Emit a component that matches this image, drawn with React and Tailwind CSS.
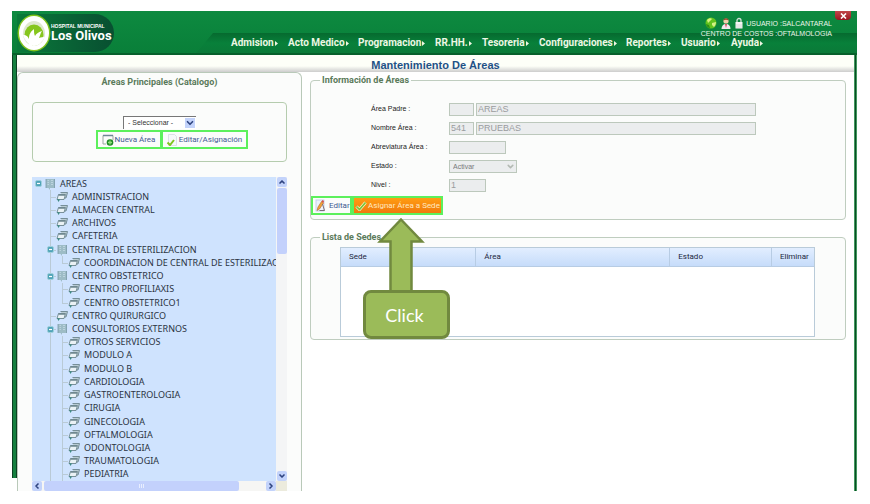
import { ChevronDown, ChevronLeft, ChevronRight, ChevronUp } from 'lucide-react';

const menu = ['Admision', 'Acto Medico', 'Programacion', 'RR.HH.', 'Tesoreria', 'Configuraciones', 'Reportes', 'Usuario', 'Ayuda'];

const tree = [
  [0, 'AREAS', true],
  [1, 'ADMINISTRACION'],
  [1, 'ALMACEN CENTRAL'],
  [1, 'ARCHIVOS'],
  [1, 'CAFETERIA'],
  [1, 'CENTRAL DE ESTERILIZACION', true],
  [2, 'COORDINACION DE CENTRAL DE ESTERILIZACION', false, true],
  [1, 'CENTRO OBSTETRICO', true],
  [2, 'CENTRO PROFILIAXIS'],
  [2, 'CENTRO OBSTETRICO1', false, true],
  [1, 'CENTRO QUIRURGICO'],
  [1, 'CONSULTORIOS EXTERNOS', true],
  [2, 'OTROS SERVICIOS'],
  [2, 'MODULO A'],
  [2, 'MODULO B'],
  [2, 'CARDIOLOGIA'],
  [2, 'GASTROENTEROLOGIA'],
  [2, 'CIRUGIA'],
  [2, 'GINECOLOGIA'],
  [2, 'OFTALMOLOGIA'],
  [2, 'ODONTOLOGIA'],
  [2, 'TRAUMATOLOGIA'],
  [2, 'PEDIATRIA'],
];

function LogoMark() {
  return (
    <svg viewBox="0 0 34 38" className="h-[38px] w-[34px] shrink-0" aria-hidden="true">
      <ellipse cx="17" cy="19" rx="16.5" ry="18.5" fill="#7fc31c" />
      <ellipse cx="17" cy="19" rx="15" ry="17" fill="#fff" />
      <ellipse cx="17" cy="19.500" rx="11" ry="12.500" fill="#dfe8cf" />
      <ellipse cx="17" cy="21" rx="9.500" ry="10.500" fill="#86c61d" />
      <path d="M6 21c4 0 5 2 6 4 0-4 1-7 5-10 0 3 0 5 1 7 1-2 3-4 7-5-2 3-2 5-3 7 2-1 4-1 6-1-3 5-6 9-11 9s-9-5-11-11z" fill="#fff" />
      <path d="M11 33l3-9 1 8z" fill="#fff" />
    </svg>
  );
}

function GlobeIcon() {
  return (
    <svg viewBox="0 0 12 12" className="h-3 w-3" aria-hidden="true">
      <circle cx="6" cy="6" r="5.500" fill="#62c41f" />
      <path d="M2 3c2-2 4-2 5-1L5 4 3 6zM7 6l4-1c0 2-1 4-2 5L7 8z" fill="#d3f284" />
      <path d="M1 7l3 1 1 3C3 11 1 9 1 7z" fill="#2f8f14" />
    </svg>
  );
}

function PersonIcon() {
  return (
    <svg viewBox="0 0 10 12" className="h-3 w-[10px]" aria-hidden="true">
      <path d="M.5 12c0-3 1.500-5 4.500-5s4.500 2 4.500 5z" fill="#f1e9ee" />
      <path d="M4 7h2l-1 4z" fill="#d9415a" />
      <circle cx="5" cy="4" r="2.600" fill="#f2cfae" />
      <path d="M2.400 3.500C2.500.5 7.500.5 7.600 3.500 6 2.500 4 2.500 2.400 3.500z" fill="#9b4a2b" />
    </svg>
  );
}

function LockIcon() {
  return (
    <svg viewBox="0 0 8 12" className="h-3 w-2" aria-hidden="true">
      <path d="M2 6V3.500a2 2 0 0 1 4 0V6" fill="none" stroke="#d4e0d8" strokeWidth="1.300" />
      <rect x=".5" y="5" width="7" height="6.500" fill="#f5f5f5" />
      <path d="M1 8h6M1 10h6" stroke="#c4c9c6" strokeWidth=".6" />
    </svg>
  );
}

function NewAreaIcon() {
  return (
    <svg viewBox="0 0 12 12" className="h-3 w-3" aria-hidden="true">
      <path d="M1 1.500h10V6M1 1.500V10h3" fill="none" stroke="#9aa9a0" />
      <path d="M1 1.500h10" stroke="#6e8695" strokeWidth="1.500" />
      <circle cx="8" cy="8.500" r="3.300" fill="#1d8a24" />
      <path d="M8 6.500v4M6 8.500h4" stroke="#8fe07c" strokeWidth="1.300" />
    </svg>
  );
}

function CheckPageIcon() {
  return (
    <svg viewBox="0 0 12 12" className="h-3 w-3" aria-hidden="true">
      <path d="M2.500.5h6l2 2v9h-8z" fill="#f7f8fa" stroke="#d6dbe2" strokeWidth=".8" />
      <path d="M1.500 8.500L4 11l4-5" fill="none" stroke="#7fc51e" strokeWidth="2" />
    </svg>
  );
}

function PencilIcon() {
  return (
    <svg viewBox="0 0 12 13" className="h-[13px] w-3" aria-hidden="true">
      <rect x="1" y="1" width="8" height="11" fill="#edf2fb" stroke="#b9cbea" strokeWidth=".8" />
      <path d="M2 11.500l1-3.500 3.500-5.500 2 1.500-4 6z" fill="#f0a33a" stroke="#b3652a" strokeWidth=".6" />
      <path d="M6.500 2.500l1-1.500 1.500 1-.5 2z" fill="#d6524a" />
      <path d="M7.500 5l2 6.500h-5" fill="none" stroke="#7d6f78" />
    </svg>
  );
}

function CheckIcon() {
  return (
    <svg viewBox="0 0 12 10" className="h-[10px] w-3" aria-hidden="true">
      <path d="M1.500 5.500L4.500 8.500 10.500 1.500" fill="none" stroke="#f4f8d0" strokeWidth="3" />
      <path d="M1.500 5.500L4.500 8.500 10.500 1.500" fill="none" stroke="#7cc238" strokeWidth="1.700" />
    </svg>
  );
}

function FolderNodeIcon() {
  return (
    <svg viewBox="0 0 12 12" className="h-3 w-3 shrink-0" aria-hidden="true">
      <path d="M2 1h8.500v9H6v2L4.500 10H2z" fill="#9dbcc6" />
      <path d="M3.500 2.500H5M7 2.500h2M3.500 4.500H5M7 4.500h2M3.500 6.500H5M7 6.500h2" stroke="#bcd4de" />
      <path d="M10.500 1v9M2 1v9" stroke="#7898a3" strokeWidth=".8" />
    </svg>
  );
}

function LeafNodeIcon() {
  return (
    <svg viewBox="0 0 12 12" className="h-3 w-3 shrink-0" aria-hidden="true">
      <path d="M4.500 1.500h7l-1.500 5.500h-2" fill="#b9ccd2" stroke="#6d868e" strokeWidth=".9" />
      <path d="M2.500 3.500h7L8 8.500H1z" fill="#eaf2f5" stroke="#6d868e" strokeWidth=".9" />
      <path d="M2.500 4h6.500" stroke="#6d868e" strokeWidth="1.500" />
      <path d="M1 8l3 .5-1.500 2.500z" fill="#3f8a83" />
    </svg>
  );
}

function ToggleIcon() {
  return (
    <svg viewBox="0 0 7 7" className="relative h-[7px] w-[7px]" aria-hidden="true">
      <rect x=".5" y=".5" width="6" height="6" rx="1.500" fill="#4fa3b8" stroke="#9fcfdc" />
      <path d="M2 3.500h3" stroke="#fff" strokeWidth="1.200" />
    </svg>
  );
}

function TreeRow({ level, label, open, last }) {
  return (
    <li className="flex flex-1 items-center whitespace-nowrap">
      {level > 0 && <span className="w-3 shrink-0" />}
      {level > 1 && <span className="flex w-3 shrink-0 justify-center self-stretch"><span className="w-px bg-[#b9cad6]" /></span>}
      <span className="relative flex w-3 shrink-0 items-center justify-center self-stretch">
        {level > 0 && (
          <>
            <span className={last ? 'absolute top-0 left-[6px] h-1/2 w-px bg-[#b9cad6]' : 'absolute top-0 left-[6px] h-full w-px bg-[#b9cad6]'} />
            <span className="absolute top-1/2 right-0 h-px w-[6px] bg-[#b9cad6]" />
          </>
        )}
        {open && <button type="button" aria-label={'Contraer ' + label} className="flex"><ToggleIcon /></button>}
      </span>
      {open ? <FolderNodeIcon /> : <LeafNodeIcon />}
      <span className="pl-1">{label}</span>
    </li>
  );
}

const scrollButton = 'flex h-[10px] w-[10px] shrink-0 items-center justify-center rounded-xs bg-[#c3d3fb] text-[#2f4480]';
const field = 'h-[13px] border border-[#bcc8bc] bg-[#ebedee] px-px text-[9px] leading-[11px] text-[#9a9c9e]';
const outlined = 'flex h-[19px] items-center border-2 border-[#5cf05c]';
const legend = 'ml-[9px] px-[2px] font-[Roboto,sans-serif] text-[9px] leading-[10px] font-bold text-[#5a7a5a]';

function Header() {
  return (
    <header className="relative flex h-[44px] items-start border-b-2 border-[#07602b] bg-linear-to-b from-[#0d8a40] to-[#097f39]">
      <div className="mt-[3px] ml-[5px] flex h-[38px] w-[97px] shrink-0 items-center rounded-r-full bg-linear-to-r from-[#0a7a3a] to-[#084f31]">
        <LogoMark />
        <div className="flex flex-col whitespace-nowrap text-white">
          <span className="font-['Liberation_Sans',sans-serif] text-[5px] leading-[5px] font-bold">HOSPITAL MUNICIPAL</span>
          <span className="font-[Roboto,sans-serif] text-[13px] leading-[14px] font-bold">Los Olivos</span>
        </div>
      </div>
      <nav className="ml-[82px] min-w-0 flex-1 self-end bg-linear-to-b from-[#066a2f] via-[#08803a] to-[#0a7a38] [clip-path:polygon(17px_0,100%_0,100%_100%,0_100%)]">
        <ul className="grid h-5 grid-cols-[57px_70px_77px_47px_57px_87px_55px_50px_auto] items-center pl-[35px] font-[Roboto,sans-serif] text-[10px] leading-3 font-bold text-[#eef7e4]">
          {menu.map((item) => (
            <li key={item}>
              <a href="#" className="flex items-center gap-px">
                {item}
                <svg viewBox="0 0 3 5" className="h-[5px] w-[3px]" aria-hidden="true"><path d="M0 0l3 2.500L0 5z" fill="currentColor" /></svg>
              </a>
            </li>
          ))}
        </ul>
      </nav>
      <div className="absolute top-1 right-[25px] flex flex-col items-end font-['Liberation_Sans',sans-serif] text-[7px] leading-[10px] text-[#eaf6ea]">
        <div className="flex items-end gap-[3px]">
          <span className="flex items-start gap-1"><GlobeIcon /><PersonIcon /><LockIcon /></span>
          <span className="pt-1">USUARIO :SALCANTARAL</span>
        </div>
        <span>CENTRO DE COSTOS :OFTALMOLOGIA</span>
      </div>
      <button type="button" aria-label="Cerrar" className="absolute top-0 right-[6px] flex h-[9px] w-4 items-center justify-center rounded-b-sm bg-linear-to-b from-[#c0454a] to-[#9c1020]">
        <svg viewBox="0 0 7 6" className="h-[6px] w-[7px]" aria-hidden="true"><path d="M1 .5l5 5M6 .5l-5 5" stroke="#fff" strokeWidth="1.600" /></svg>
      </button>
    </header>
  );
}

function Catalogue() {
  return (
    <section className="flex w-[285px] shrink-0 flex-col rounded-t-md border border-b-0 border-[#b9c9b9] bg-[#fbfcfb] pl-[14px]">
      <h2 className="mt-1 mr-[14px] text-center font-[Roboto,sans-serif] text-[9px] leading-[11px] font-bold text-[#5a7a5a]">Áreas Principales (Catalogo)</h2>
      <div className="mt-[14px] mr-[14px] flex h-[60px] flex-col items-center rounded-sm border border-[#b5ccae] pt-[13px]">
        <label className="relative flex">
          <span className="sr-only">Área</span>
          <select className="h-[13px] w-[73px] appearance-none border border-r-0 border-b-0 border-[#777] bg-white pl-1 text-[7px] leading-[12px] text-[#333]">
            <option>- Seleccionar -</option>
          </select>
          <ChevronDown className="pointer-events-none absolute top-[2px] right-px h-[10px] w-[10px] bg-[#c3d3fb] text-[#2f4480]" strokeWidth={4} />
        </label>
        <div className="mt-px ml-6 flex font-[Roboto,sans-serif] text-[8px] text-[#3f5a92]">
          <button type="button" className={outlined + ' w-[66px] justify-center gap-px'}><NewAreaIcon /><span>Nueva Área</span></button>
          <button type="button" className={outlined + ' -ml-px w-[87px] justify-center gap-px'}><CheckPageIcon /><span>Editar/Asignación</span></button>
        </div>
      </div>
      <div className="mt-[15px] mr-[14px] flex h-[304px] font-['Noto_Sans',sans-serif] text-[9px] leading-3 text-[#2b3342]">
        <ul className="flex min-w-0 flex-1 flex-col overflow-hidden bg-[#cfe3fe]">
          {tree.map(([level, label, open, last]) => <TreeRow key={label} level={level} label={label} open={open} last={last} />)}
        </ul>
        <div className="flex w-[11px] flex-col items-center bg-[#f4f5f6]">
          <span className={scrollButton}><ChevronUp className="h-2 w-2" strokeWidth={5} /></span>
          <span className="mt-px h-[66px] w-[10px] rounded-xs bg-[#c3d1fc]" />
          <span className={scrollButton + ' mt-auto'}><ChevronDown className="h-2 w-2" strokeWidth={5} /></span>
        </div>
      </div>
      <div className="mr-[14px] flex h-[10px] items-center">
        <div className="flex flex-1 items-center bg-[#f6f6f4]">
          <span className={scrollButton}><ChevronLeft className="h-2 w-2" strokeWidth={5} /></span>
          <span className="mx-[2px] flex h-[10px] w-4/5 items-center justify-center gap-px rounded-xs bg-[#c3d1fc]">
            <span className="h-1 w-px bg-[#e8eefe]" /><span className="h-1 w-px bg-[#e8eefe]" /><span className="h-1 w-px bg-[#e8eefe]" />
          </span>
          <span className={scrollButton + ' ml-auto'}><ChevronRight className="h-2 w-2" strokeWidth={5} /></span>
        </div>
        <span className="h-full w-[11px] bg-[#ecebdd]" />
      </div>
    </section>
  );
}

function Row({ label, id, children }) {
  return (
    <div className="flex h-[18px] items-center">
      <label htmlFor={id} className="w-[78px] shrink-0 text-[7px] leading-3 text-[#222]">{label}</label>
      {children}
    </div>
  );
}

function AreaForm() {
  return (
    <fieldset className="min-w-0 rounded-sm border border-[#bfcdbf] bg-[#fbfcfb]">
      <legend className={legend}>Información de Áreas</legend>
      <div className="mt-[15px] ml-[60px] flex flex-col gap-px">
        <Row label="Área Padre :" id="padre">
          <input id="padre" disabled className={field + ' w-[25px]'} />
          <input aria-label="Nombre del área padre" disabled defaultValue="AREAS" className={field + ' mr-[89px] ml-[2px] min-w-0 flex-1'} />
        </Row>
        <Row label="Nombre Área :" id="nombre">
          <input id="nombre" disabled defaultValue="541" className={field + ' w-[25px]'} />
          <input aria-label="Nombre" disabled defaultValue="PRUEBAS" className={field + ' mr-[89px] ml-[2px] min-w-0 flex-1'} />
        </Row>
        <Row label="Abreviatura Área :" id="abreviatura">
          <input id="abreviatura" disabled className={field + ' w-[57px]'} />
        </Row>
        <Row label="Estado :" id="estado">
          <span className="relative flex">
            <select id="estado" disabled className="h-[13px] w-[68px] appearance-none border border-[#bcc8bc] bg-[#ebedee] pl-[3px] text-[7px] leading-[11px] text-[#77797b] opacity-100">
              <option>Activar</option>
            </select>
            <ChevronDown className="pointer-events-none absolute top-[2px] right-[2px] h-[9px] w-[9px] text-[#b3b9b3]" strokeWidth={4} />
          </span>
        </Row>
        <Row label="Nivel :" id="nivel">
          <input id="nivel" disabled defaultValue="1" className={field + ' w-[37px]'} />
        </Row>
      </div>
      <div className="mt-[2px] mb-1 flex font-[Roboto,sans-serif] text-[8px]">
        <button type="button" className={outlined + ' w-[41px] gap-[2px] pl-[2px] text-[#3f5a92]'}><PencilIcon /><span>Editar</span></button>
        <button type="button" className={outlined + ' w-[91px] justify-center gap-px bg-linear-to-b from-[#ff9c12] to-[#f07a0c] text-[#ffe9c0]'}><CheckIcon /><span>Asignar Área a Sede</span></button>
      </div>
    </fieldset>
  );
}

function Venues() {
  const head = 'border-r border-[#b7cce4] px-2 text-left font-normal last:border-r-0';
  return (
    <fieldset className="mt-3 min-w-0 rounded-sm border border-[#bfcdbf] bg-[#fbfcfb]">
      <legend className={legend}>Lista de Sedes</legend>
      <div className="mt-[5px] mr-[30px] mb-[2px] ml-[29px] h-[90px] border border-[#b9cbd9] bg-white">
        <table className="w-full table-fixed border-collapse font-[Roboto,sans-serif] text-[8px] leading-[18px] text-[#1d2740]">
          <thead>
            <tr className="border-b border-[#b7cce4] bg-linear-to-b from-[#e2eeff] to-[#c6dcfa]">
              <th className={head + ' w-[28.5%]'}>Sede</th>
              <th className={head + ' w-[41%]'}>Área</th>
              <th className={head + ' w-[21.5%]'}>Estado</th>
              <th className={head}>Eliminar</th>
            </tr>
          </thead>
        </table>
      </div>
    </fieldset>
  );
}

function ClickCallout() {
  return (
    <div className="pointer-events-none absolute top-[145px] left-[61px] flex w-[87px] flex-col items-center">
      <svg viewBox="0 0 48 76" className="-ml-3 h-[76px] w-12" aria-hidden="true">
        <path d="M24 2.500L45 24.500H34.500V76H13.500V24.500H3z" fill="#9bbb59" stroke="#71893f" strokeWidth="2.500" />
      </svg>
      <div className="-mt-[3px] flex h-[49px] w-full items-center justify-center rounded-lg border-3 border-[#71893f] bg-[#9bbb59] pr-1 font-[Lato,sans-serif] text-[18px] leading-6 text-white">Click</div>
    </div>
  );
}

export default function App() {
  return (
    <div className="bg-white pt-[11px] pr-[13px] pb-3 pl-3 font-['Liberation_Sans',Arial,sans-serif]">
      <Header />
      <div className="flex">
        <div className="mb-[13px] w-[5px] shrink-0 border-x border-[#0b3f22] bg-[#15803f]" />
        <main className="min-w-0 flex-1">
          <h1 className="h-[17px] bg-linear-to-b from-[#fdfff8] from-65% to-[#cdcdcd] text-center text-[11px] leading-[20px] font-bold text-[#1f5286]">Mantenimiento De Áreas</h1>
          <div className="flex">
            <Catalogue />
            <div className="relative min-w-0 flex-1 pt-[3px] pr-2 pl-2">
              <AreaForm />
              <Venues />
              <ClickCallout />
            </div>
          </div>
        </main>
        <div className="w-[3px] shrink-0 border-x border-[#3f9a5c] bg-[#0b4a26]" />
      </div>
    </div>
  );
}
